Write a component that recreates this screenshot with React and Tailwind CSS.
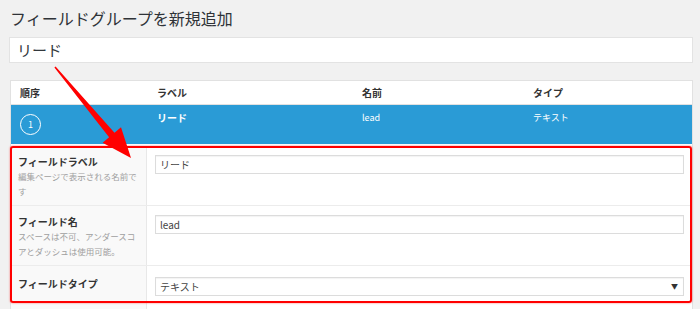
import React from 'react';

const rows = [
  {
    label: 'フィールドラベル',
    desc: ['編集ページで表示される名前で', 'す'],
    value: 'リード',
    height: 'h-[59px]',
    pad: 'pt-[9px]',
  },
  {
    label: 'フィールド名',
    desc: ['スペースは不可、アンダースコ', 'アとダッシュは使用可能。'],
    value: 'lead',
    height: 'h-[60px]',
    pad: 'pt-[9px]',
  },
  {
    label: 'フィールドタイプ',
    desc: [],
    value: 'テキスト',
    height: 'h-[50px]',
    pad: 'pt-[11px]',
    select: true,
  },
];

export default function App() {
  return (
    <div className="relative w-[700px] h-[309px] overflow-hidden bg-[#f1f1f1] font-['Noto_Sans_CJK_JP',sans-serif]">
      {/* Page title */}
      <h1 className="pl-[10px] pt-[6px] text-[16px] leading-[24px] text-[#2f3338]">
        フィールドグループを新規追加
      </h1>

      {/* Group name */}
      <div className="ml-[9px] mt-[7px] w-[684px] h-[26px] bg-white border border-[#e3e3e3] flex items-center px-[7px] text-[15px] text-[#32373c]">
        リード
      </div>

      {/* Field table */}
      <div className="ml-[10px] mt-[17px] w-[683px] border border-[#e1e1e1] bg-white">
        <div className="grid grid-cols-[136px_205px_171px_1fr] h-[24px] items-center text-[10px] font-bold text-[#333] border-b border-[#e1e1e1]">
          <div className="pl-[9px]">順序</div>
          <div className="pl-[10px]">ラベル</div>
          <div className="pl-[10px]">名前</div>
          <div className="pl-[10px]">タイプ</div>
        </div>

        <div className="grid grid-cols-[136px_205px_171px_1fr] h-[39px] bg-[#2a9bd6] text-white">
          <div className="pl-[9px] flex items-center">
            <div className="w-[21px] h-[21px] rounded-full border-[1.5px] border-white flex items-center justify-center text-[9px] leading-none">
              1
            </div>
          </div>
          <div className="pl-[10px] pt-[6px] text-[10px] font-bold leading-[14px]">リード</div>
          <div className="pl-[10px] pt-[6px] text-[9px] leading-[14px]">lead</div>
          <div className="pl-[10px] pt-[6px] text-[9px] leading-[14px]">テキスト</div>
        </div>

        {rows.map((row, i) => (
          <div
            key={row.label}
            className={`grid grid-cols-[136px_1fr] ${row.height} ${i > 0 ? 'border-t border-[#ececec]' : 'mt-[2px]'}`}
          >
            <div className={`bg-[#f9f9f9] border-r border-[#e8e8e8] pl-[7px] ${row.pad}`}>
              <div className="text-[10px] font-bold leading-[14px] text-[#333]">{row.label}</div>
              {row.desc.map((line) => (
                <div key={line} className="text-[8.5px] leading-[15px] text-[#a0a0a0] whitespace-nowrap">
                  {line}
                </div>
              ))}
            </div>
            <div className={`px-[8px] ${row.select ? 'pt-[11px]' : 'pt-[9px]'}`}>
              <div className="h-[19px] bg-white border border-[#dcdcdc] shadow-[inset_0_1px_1px_rgba(0,0,0,0.05)] flex items-center justify-between px-[4px] text-[10px] text-[#444]">
                <span>{row.value}</span>
                {row.select && <span className="text-[7px] text-[#333] pr-[1px]">▼</span>}
              </div>
            </div>
          </div>
        ))}
      </div>

      {/* Highlight box */}
      <div className="absolute left-[10px] top-[146px] w-[682px] h-[157px] border-2 border-[#ff0000] rounded-[3px] shadow-[0_0_2px_rgba(255,0,0,0.6)] pointer-events-none" />

      {/* Arrow */}
      <svg className="absolute left-0 top-0 pointer-events-none" width="700" height="309">
        <polygon
          points="55.6,66.5 114.5,132.8 121,127.3 131,158 102.6,142.7 109.1,137.2 54.4,67.5"
          fill="#ff0000"
        />
      </svg>
    </div>
  );
}
